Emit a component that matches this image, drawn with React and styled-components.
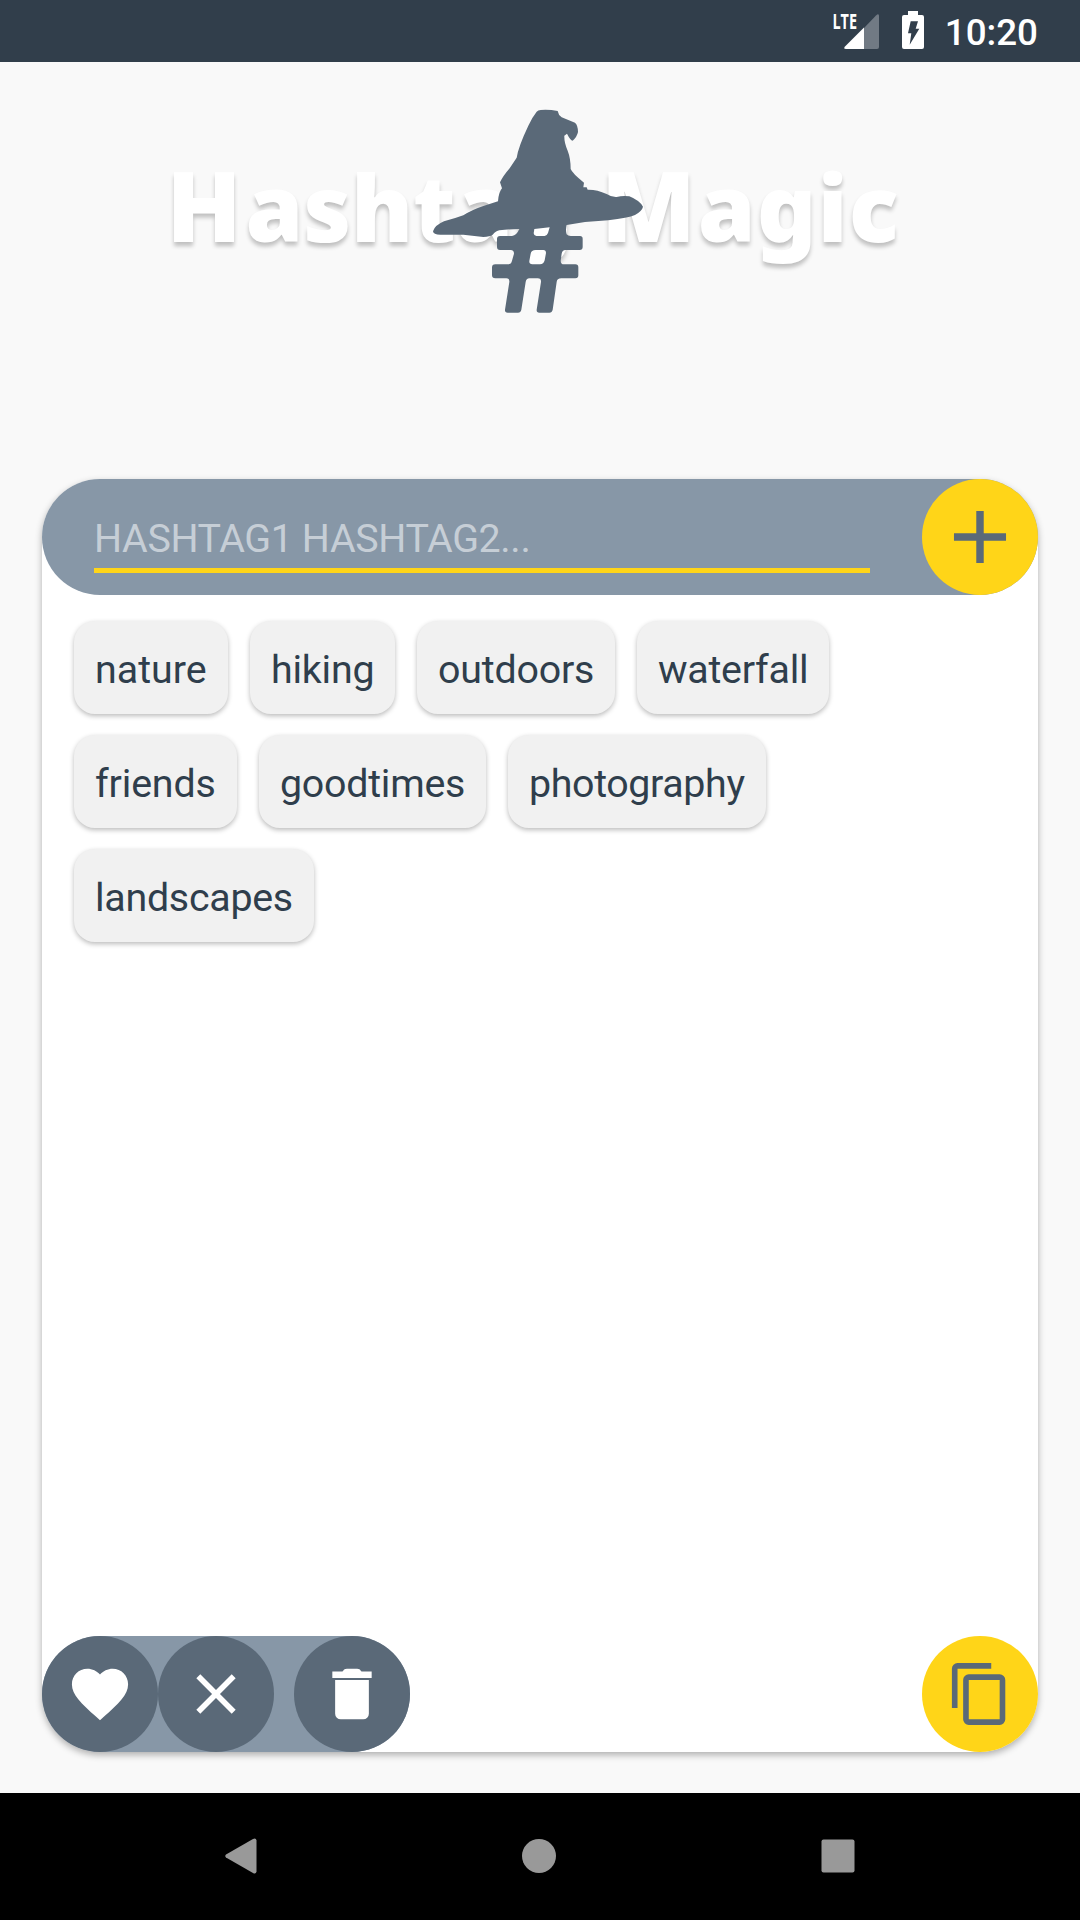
import React from 'react';
import styled, { createGlobalStyle } from 'styled-components';

const c = {
  status: '#313e4b',
  bar: '#8797a7',
  dark: '#5a6978',
  yellow: '#ffd518',
  ink: '#2f3e4c',
};

const GlobalStyle = createGlobalStyle`
  body { margin: 0; background: #f9f9f9; font-family: Roboto, sans-serif; }
  * { box-sizing: border-box; }
  svg { display: block; flex: none; }
`;

const Screen = styled.div`
  width: 1080px;
  height: 1920px;
  display: flex;
  flex-direction: column;
  overflow: hidden;
  background: #f9f9f9;
`;

const StatusBar = styled.div`
  height: 62px;
  flex: none;
  display: flex;
  align-items: center;
  justify-content: flex-end;
  padding-right: 42px;
  background: ${c.status};
`;

const Clock = styled.div`
  margin-left: 20px;
  font-size: 36.75px;
  font-weight: 500;
  line-height: 44px;
  padding-top: 3px;
  color: #fff;
`;

const Brand = styled.header`
  height: 417px;
  flex: none;
  position: relative;
  display: flex;
  align-items: flex-start;
  padding: 72px 0 0 166.5px;
`;

const Word = styled.span`
  width: ${(p) => p.$w}px;
  white-space: nowrap;
  font-family: 'Noto Sans', sans-serif;
  font-weight: 900;
  font-size: 93px;
  line-height: 140px;
  letter-spacing: ${(p) => p.$ls}px;
  color: #fff;
  text-shadow: 0 4px 4px rgba(0, 0, 0, 0.23);

  &::first-letter {
    font-size: 98px;
    letter-spacing: ${(p) => p.$cap}px;
  }
`;

const HatBox = styled.div`
  position: absolute;
  left: 420px;
  top: 28px;
`;

const Panel = styled.main`
  margin: 0 42px 41px;
  flex: 1;
  display: flex;
  flex-direction: column;
  justify-content: space-between;
  background: #fff;
  border-radius: 58px;
  box-shadow: 0 3px 7px rgba(0, 0, 0, 0.3);
`;

const InputBar = styled.div`
  height: 116px;
  display: flex;
  justify-content: space-between;
  padding-left: 52px;
  border-radius: 58px;
  background: ${c.bar};
`;

const Field = styled.div`
  width: 776px;
  height: 94px;
  padding-top: 36px;
  border-bottom: 5px solid ${c.yellow};
  font-size: 39.375px;
  line-height: 48px;
  letter-spacing: -0.36px;
  color: #c6ced6;
  white-space: nowrap;
`;

const Round = styled.button`
  width: 116px;
  height: 116px;
  flex: none;
  border: 0;
  padding: 0;
  border-radius: 50%;
  display: flex;
  align-items: center;
  justify-content: center;
  margin-left: ${(p) => p.$gap || 0}px;
  background: ${(p) => (p.$accent ? c.yellow : c.dark)};
  color: ${(p) => (p.$accent ? c.dark : '#fff')};
`;

const Tags = styled.div`
  flex: 1;
  display: flex;
  flex-wrap: wrap;
  align-content: flex-start;
  gap: 21px 22px;
  padding: 26px 32px;
`;

const Tag = styled.div`
  width: ${(p) => p.$w}px;
  height: 93px;
  padding-left: 21px;
  border-radius: 21px;
  background: #f1f1f1;
  box-shadow: 0 2px 5px rgba(0, 0, 0, 0.27);
  font-size: 39.375px;
  line-height: 97px;
  letter-spacing: ${(p) => p.$ls}px;
  white-space: nowrap;
  color: ${c.ink};
`;

const Footer = styled.div`
  display: flex;
  justify-content: space-between;
`;

const Actions = styled.div`
  display: flex;
  border-radius: 58px;
  background: ${c.bar};
`;

const NavBar = styled.nav`
  height: 127px;
  flex: none;
  background: #000;
  display: flex;
  align-items: center;
  justify-content: space-between;
  padding: 0 225px 2px;
`;

const tags = [
  { label: 'nature', width: 154, spacing: 0 },
  { label: 'hiking', width: 145, spacing: -0.2 },
  { label: 'outdoors', width: 198, spacing: -0.2 },
  { label: 'waterfall', width: 192, spacing: -0.25 },
  { label: 'friends', width: 163, spacing: -0.15 },
  { label: 'goodtimes', width: 227, spacing: -0.25 },
  { label: 'photography', width: 258, spacing: -0.36 },
  { label: 'landscapes', width: 240, spacing: -0.26 },
];

const Icon = ({ d, size = 68 }) => (
  <svg width={size} height={size} viewBox="-0.1 -0.1 24.2 24.2" fill="currentColor">
    <path d={d} />
  </svg>
);

const icons = {
  plus: 'M19 13h-6v6h-2v-6H5v-2h6V5h2v6h6v2z',
  heart: 'M12 21.35l-1.45-1.32C5.4 15.36 2 12.27 2 8.5 2 5.41 4.42 3 7.5 3c1.74 0 3.41.81 4.5 2.08C13.09 3.81 14.76 3 16.5 3 19.58 3 22 5.41 22 8.5c0 3.77-3.4 6.86-8.55 11.53L12 21.35z',
  close: 'M19 6.41L17.59 5 12 10.59 6.41 5 5 6.41 10.59 12 5 17.59 6.41 19 12 13.41 17.59 19 19 17.59 13.41 12z',
  trash: 'M5 4h3.6c.3-.2.4-.5.6-.7.3-.2.6-.3 1-.3h3.6c.4 0 .7.1 1 .3.2.2.3.5.6.7H19v2.3H5zM6 7h12v12a2 2 0 0 1-2 2H8a2 2 0 0 1-2-2z',
  copy: 'M19 21H8V7h11m0-2H8a2 2 0 0 0-2 2v14a2 2 0 0 0 2 2h11a2 2 0 0 0 2-2V7a2 2 0 0 0-2-2m-3-4H4a2 2 0 0 0-2 2v14h2V3h12V1z',
};

const StatusIcons = () => (
  <svg width="95" height="62" viewBox="0 0 95 62">
    <text x="2.5" y="29" fill="#fff" fontFamily="'Open Sans', sans-serif" fontWeight="700" fontSize="22" textLength="24.5" lengthAdjust="spacingAndGlyphs">LTE</text>
    <path d="M34 28L46 15.500Q49 13 49 16V47q0 2-2 2H34z" fill="#717a84" />
    <path d="M34 27.500V49H16q-3 0-1-2.500z" fill="#fff" />
    <path d="M78 11h10v4h4q2 0 2 2v30q0 2-2 2H74q-2 0-2-2V17q0-2 2-2h4z" fill="#fff" />
    <path d="M80.700 21.300H88L85.700 28.700H89.300L79.700 44.700L81.300 33.300H78z" fill={c.status} />
  </svg>
);

const Hat = () => (
  <svg width="240" height="240" viewBox="0 0 720 720" fill={c.dark}>
    <path d="M362 60Q387 58 413 63Q415 75 425 82L465 98Q474 106 474 126Q471 141 458 152Q451 151 441 131L433 137Q432 158 443 182Q452 205 452 237Q457 250 492 278L490 292L500 292L503 299Q530 298 560 312Q575 322 590 321Q608 316 628 319Q658 331 669 350Q667 362 645 375Q625 384 565 391L495 396L440 405Q436 420 440 433Q444 438 452 438H480Q488 438 488 446V471Q488 480 479 480H436Q427 480 425 491L422 512Q422 523 432 523H466Q475 523 475 532V556Q475 565 466 565H424Q411 565 410 576L398 659Q396 668 388 668H358Q349 668 350 659L363 576Q364 565 353 565H328Q319 565 317 576L304 659Q302 668 294 668H263Q254 668 255 659L268 576Q269 565 259 565H226Q216 565 216 556V533Q216 523 226 523H263Q274 523 276 512L282 491Q282 480 272 480H240Q231 480 231 471V447Q231 438 240 438H276Q290 436 298 417Q270 417 238 421Q229 422 218 434Q210 440 190 441L130 434L65 434Q40 435 39 424Q44 406 72 394Q103 386 130 376Q154 360 190 348L234 334Q236 306 246 295L240 277Q249 258 269 235L290 203Q295 170 325 107Q337 81 350 65Q354 61 362 60Z" />
    <path d="M343 417L389 412L384 429Q381 437 374 438H349Q342 438 341 430ZM347 480H370Q378 480 378 489L374 511Q371 523 360 523H337Q327 523 328 513L332 491Q334 480 347 480Z" fill="#fff" />
  </svg>
);

export default function App() {
  return (
    <>
      <GlobalStyle />
      <Screen>
        <StatusBar>
          <StatusIcons />
          <Clock>10:20</Clock>
        </StatusBar>
        <Brand>
          <Word $w={434.5} $ls={-0.3} $cap={4}>Hashtag</Word>
          <Word $w={300} $ls={1} $cap={2}>Magic</Word>
          <HatBox><Hat /></HatBox>
        </Brand>
        <Panel>
          <InputBar>
            <Field>HASHTAG1 HASHTAG2...</Field>
            <Round $accent><Icon d={icons.plus} size={90} /></Round>
          </InputBar>
          <Tags>
            {tags.map((t) => <Tag key={t.label} $w={t.width} $ls={t.spacing}>{t.label}</Tag>)}
          </Tags>
          <Footer>
            <Actions>
              <Round><Icon d={icons.heart} /></Round>
              <Round><Icon d={icons.close} /></Round>
              <Round $gap={20}><Icon d={icons.trash} /></Round>
            </Actions>
            <Round $accent><Icon d={icons.copy} /></Round>
          </Footer>
        </Panel>
        <NavBar>
          <svg width="32" height="36" viewBox="0 0 32 36"><path d="M1 16.500L28 1q3-1.500 3.500 1.500v31Q31 36.500 28 35L1 19.500q-1.500-1.500 0-3z" fill="#999" /></svg>
          <svg width="34" height="34" viewBox="0 0 34 34"><circle cx="17" cy="17" r="17" fill="#999" /></svg>
          <svg width="34" height="34" viewBox="0 0 34 34"><rect width="33" height="33" x=".5" y=".5" rx="2" fill="#999" /></svg>
        </NavBar>
      </Screen>
    </>
  );
}
